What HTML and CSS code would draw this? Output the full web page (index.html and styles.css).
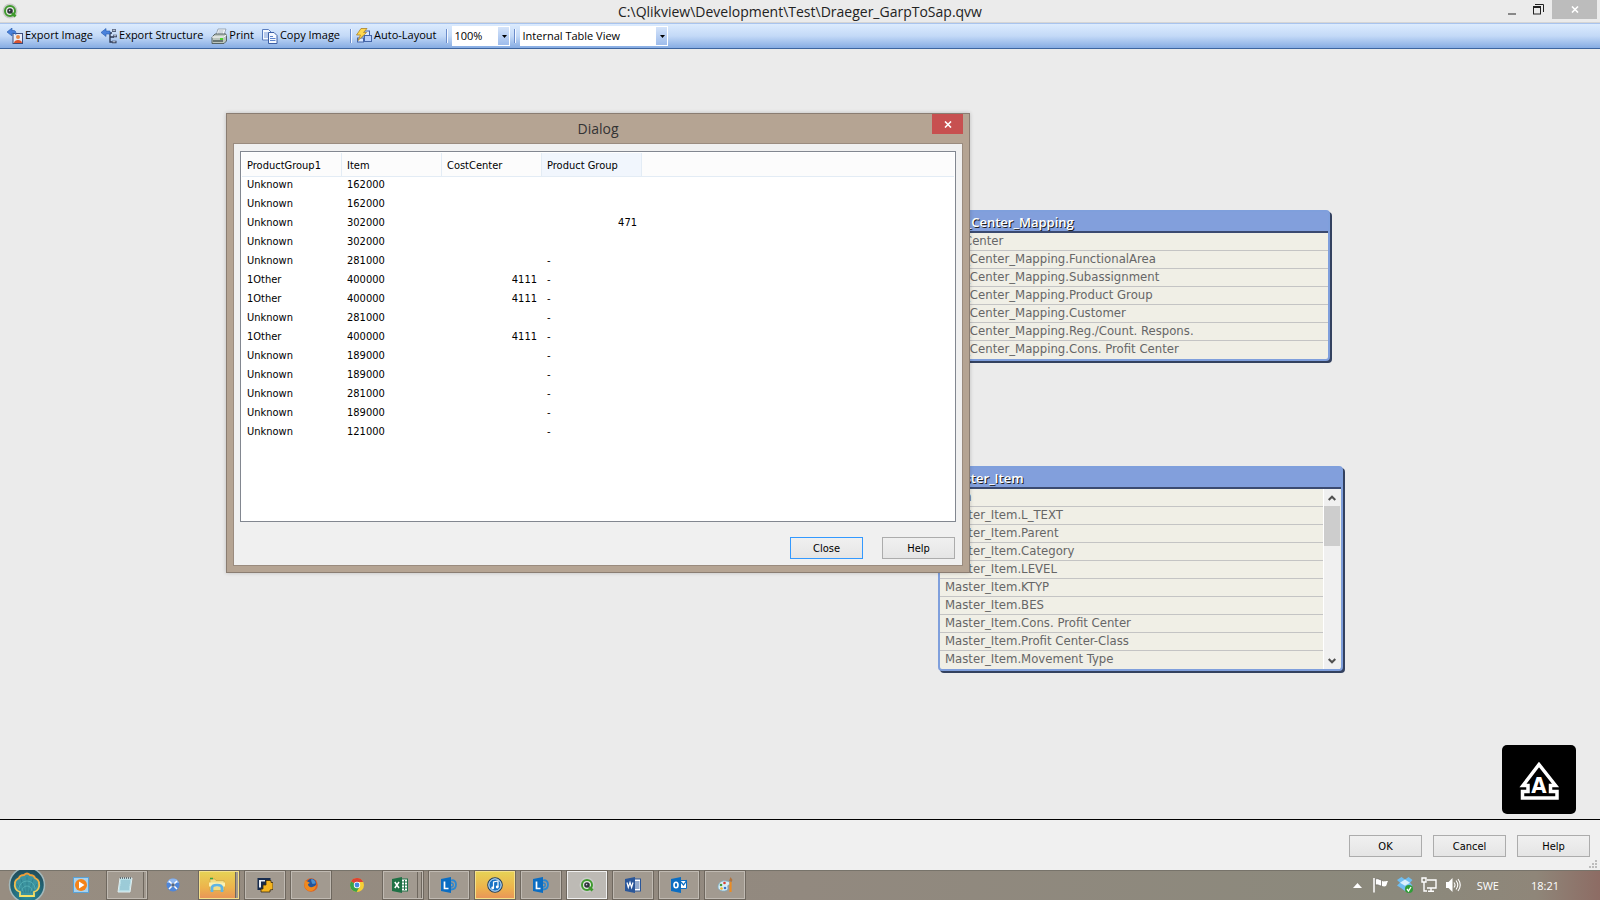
FILE: index.html
```html
<!DOCTYPE html>
<html lang="en">
<head>
    <meta charset="UTF-8">
    <meta name="viewport" content="width=device-width, initial-scale=1.0">
    <title>C:\Qlikview\Development\Test\Draeger_GarpToSap.qvw</title>
    <link rel="stylesheet" href="styles.css">
</head>
<body>

    <!-- Shared shapes -->
    <svg class="defs" width="0" height="0">
        <defs>
            <symbol id="qlik" viewBox="0 0 16 16">
                <circle cx="8" cy="8" r="7.5" fill="#c9cbc8"/>
                <circle cx="8" cy="8" r="5" fill="#e9ece8" stroke="#3f9a2e" stroke-width="2"/>
                <path d="M10 10l3.500 3.500" stroke="#3f9a2e" stroke-width="2.8"/>
                <circle cx="8" cy="8" r="2.8" fill="#30343a"/>
                <circle cx="7.6" cy="7.6" r=".8" fill="#c8d4e0"/>
            </symbol>
            <symbol id="cross" viewBox="0 0 8 7">
                <path d="M1 .5l6 6M7 .5l-6 6" stroke="#fff" stroke-width="1.6"/>
            </symbol>
            <symbol id="lync" viewBox="0 0 16 16">
                <path d="M10 3.500c3-1 5 1 5 4s-2 5-5 5" fill="none" stroke="#2a86d0" stroke-width="1.8"/>
                <path d="M10 6c3 0 3 4 0 4" fill="none" stroke="#2a86d0" stroke-width="1.4"/>
                <path d="M0 2l10-2v16l-10-2z" fill="#0b6dc2"/>
                <path d="M3.500 4.500v7h4" fill="none" stroke="#fff" stroke-width="1.7"/>
            </symbol>
        </defs>
    </svg>

    <div class="screen">
        <header class="titlebar">
            <svg class="app-icon" width="16" height="16"><use href="#qlik"/></svg>
            <h1 class="window-title">C:\Qlikview\Development\Test\Draeger_GarpToSap.qvw</h1>
            <div class="window-buttons">
                <button class="win-btn" aria-label="Minimize">
                    <svg width="8" height="10"><rect y="8" width="8" height="2" fill="#888"/></svg>
                </button>
                <button class="win-btn" aria-label="Restore">
                    <svg width="11" height="11" fill="none" stroke="#222"><path d="M2 .5h8.500v7.500"/><rect x=".5" y="3" width="7" height="7"/><path d="M0 3h8" stroke-width="2"/></svg>
                </button>
                <button class="win-btn win-close" aria-label="Close">
                    <svg width="8" height="7"><use href="#cross"/></svg>
                </button>
            </div>
        </header>

        <nav class="toolbar">
            <button class="tool">
                <svg width="16" height="16" viewBox="0 0 16 16">
                    <rect x="6" y="5.500" width="9.500" height="10" fill="#e8edf8" stroke="#3b4c7c"/>
                    <circle cx="11" cy="9" r="2" fill="#e58b4a"/>
                    <path d="M7 15c0-4 8-4 8 0z" fill="#d9522f"/>
                    <path d="M0 4l5-4v2.500h2c2 0 2 3 2 4-1-1-2-1.500-4-1.200v2.700z" fill="#4a82dc" stroke="#2457ab" stroke-width=".6"/>
                </svg>
                Export Image
            </button>
            <button class="tool">
                <svg width="16" height="16" viewBox="0 0 16 16">
                    <path d="M8 5h3M9 5v9h3M9 9h4" fill="none" stroke="#2b3650" stroke-width="1.3"/>
                    <path d="M11 2.500h4M12 8h4M11 14h4.500" stroke="#2b3650" stroke-width="2.6"/>
                    <path d="M11.500 2.300h3M12.500 7.800h3M11.500 13.800h3" stroke="#dde5f5" stroke-width="1"/>
                    <path d="M0 4.500l5-4v2.500h4v3h-4v2.500z" fill="#4a82dc" stroke="#2457ab" stroke-width=".6"/>
                </svg>
                Export Structure
            </button>
            <button class="tool">
                <svg width="16" height="16" viewBox="0 0 16 16">
                    <path d="M5 7l2-6h8l-2 6z" fill="#f6f8fa" stroke="#8b98a4" stroke-width=".8"/>
                    <path d="M7.500 3h5M7 5h5" stroke="#9aa8b4" stroke-width=".8"/>
                    <path d="M1 9l3-3h11l.5 2v5l-2.500 2.500h-12z" fill="#bcc6bf" stroke="#4d5a59" stroke-width=".9"/>
                    <path d="M1 9h11.500l3-2" fill="none" stroke="#fff"/>
                    <path d="M2 13h10" stroke="#44524f" stroke-width="1.4"/>
                    <rect x="9" y="10" width="3" height="2" fill="#4cd32f"/>
                </svg>
                Print
            </button>
            <button class="tool">
                <svg width="16" height="16" viewBox="0 0 16 16" stroke="#5a7dbf" fill="#f5f9ff">
                    <path d="M.5 1.500h6l2.500 2.500v8h-8.500z"/>
                    <path d="M2 5h4M2 7h4M2 9h4" stroke="#7b9bd6"/>
                    <path d="M6.500 4.500h5.500l3 3v8h-8.500z" stroke="#3b5ea5"/>
                    <path d="M8 8.500h3M8 10.500h5.500M8 12.500h5.500" stroke="#5c83cc"/>
                </svg>
                Copy Image
            </button>
            <span class="sep"></span>
            <button class="tool">
                <svg width="16" height="16" viewBox="0 0 16 16">
                    <rect x="6.500" y="3" width="7" height="5" fill="#d9e7ff" stroke="#4465a8"/>
                    <rect x="8.500" y="7.500" width="7" height="6" fill="#b9d0fa" stroke="#4465a8"/>
                    <rect x="1.500" y="10" width="6" height="4" fill="#d9e7ff" stroke="#4465a8"/>
                    <path d="M5 .5h6l-3.500 4h3l-8.500 8 2.500-5.500h-4z" fill="#ffd84d" stroke="#a9812a" stroke-width=".8"/>
                </svg>
                Auto-Layout
            </button>
            <span class="sep"></span>
            <div class="combo combo-zoom">
                <select aria-label="Zoom"><option>100%</option></select>
                <svg class="combo-arrow" width="5" height="3"><path d="M0 0h5l-2.500 3z"/></svg>
            </div>
            <span class="sep"></span>
            <div class="combo combo-view">
                <select aria-label="View"><option>Internal Table View</option></select>
                <svg class="combo-arrow" width="5" height="3"><path d="M0 0h5l-2.500 3z"/></svg>
            </div>
        </nav>

        <main class="canvas">
            <section class="node node-mapping">
                <h2 class="node-title">Cost_Center_Mapping</h2>
                <ul class="fields">
                    <li>CostCenter</li>
                    <li>Cost_Center_Mapping.FunctionalArea</li>
                    <li>Cost_Center_Mapping.Subassignment</li>
                    <li>Cost_Center_Mapping.Product Group</li>
                    <li>Cost_Center_Mapping.Customer</li>
                    <li>Cost_Center_Mapping.Reg./Count. Respons.</li>
                    <li>Cost_Center_Mapping.Cons. Profit Center</li>
                </ul>
            </section>

            <section class="node node-item">
                <h2 class="node-title">Master_Item</h2>
                <div class="node-body">
                    <ul class="fields">
                        <li>Item</li>
                        <li>Master_Item.L_TEXT</li>
                        <li>Master_Item.Parent</li>
                        <li>Master_Item.Category</li>
                        <li>Master_Item.LEVEL</li>
                        <li>Master_Item.KTYP</li>
                        <li>Master_Item.BES</li>
                        <li>Master_Item.Cons. Profit Center</li>
                        <li>Master_Item.Profit Center-Class</li>
                        <li>Master_Item.Movement Type</li>
                    </ul>
                    <div class="scrollbar">
                        <button class="scroll-btn" aria-label="Scroll up"><svg width="8" height="6"><path d="M.7 5l3.300-3.300 3.300 3.300" fill="none" stroke="#505050" stroke-width="2"/></svg></button>
                        <div class="thumb"></div>
                        <button class="scroll-btn" aria-label="Scroll down"><svg width="8" height="6"><path d="M.7 1l3.300 3.300 3.300-3.300" fill="none" stroke="#505050" stroke-width="2"/></svg></button>
                    </div>
                </div>
            </section>

            <svg class="badge" width="74" height="69" viewBox="0 0 74 69">
                <rect width="74" height="69" rx="5"/>
                <path d="M37 19.500L53.500 40.500h-5v6h6.500v6.500h-34.500v-6.500h5.500v-6h-5z" fill="none" stroke="#fff" stroke-width="3.5"/>
                <text class="badge-letter" x="37" y="48" text-anchor="middle">A</text>
            </svg>

            <section class="dialog" role="dialog" aria-labelledby="dialog-title">
                <div class="dialog-head">
                    <h2 class="dialog-title" id="dialog-title">Dialog</h2>
                    <button class="dialog-close" aria-label="Close dialog"><svg width="8" height="7"><use href="#cross"/></svg></button>
                </div>
                <div class="dialog-body">
                    <div class="grid">
                        <table>
                            <thead>
                                <tr><th>ProductGroup1</th><th>Item</th><th>CostCenter</th><th class="hot">Product Group</th><th class="rest"></th></tr>
                            </thead>
                            <tbody>
                                <tr><td>Unknown</td><td>162000</td><td></td><td></td><td></td></tr>
                                <tr><td>Unknown</td><td>162000</td><td></td><td></td><td></td></tr>
                                <tr><td>Unknown</td><td>302000</td><td></td><td class="num">471</td><td></td></tr>
                                <tr><td>Unknown</td><td>302000</td><td></td><td></td><td></td></tr>
                                <tr><td>Unknown</td><td>281000</td><td></td><td>-</td><td></td></tr>
                                <tr><td>1Other</td><td>400000</td><td class="num">4111</td><td>-</td><td></td></tr>
                                <tr><td>1Other</td><td>400000</td><td class="num">4111</td><td>-</td><td></td></tr>
                                <tr><td>Unknown</td><td>281000</td><td></td><td>-</td><td></td></tr>
                                <tr><td>1Other</td><td>400000</td><td class="num">4111</td><td>-</td><td></td></tr>
                                <tr><td>Unknown</td><td>189000</td><td></td><td>-</td><td></td></tr>
                                <tr><td>Unknown</td><td>189000</td><td></td><td>-</td><td></td></tr>
                                <tr><td>Unknown</td><td>281000</td><td></td><td>-</td><td></td></tr>
                                <tr><td>Unknown</td><td>189000</td><td></td><td>-</td><td></td></tr>
                                <tr><td>Unknown</td><td>121000</td><td></td><td>-</td><td></td></tr>
                            </tbody>
                        </table>
                    </div>
                    <div class="dialog-actions">
                        <button class="btn btn-default">Close</button>
                        <button class="btn">Help</button>
                    </div>
                </div>
            </section>
        </main>

        <footer class="actions">
            <button class="btn">OK</button>
            <button class="btn">Cancel</button>
            <button class="btn">Help</button>
            <svg class="grip" width="8" height="8" fill="#bdbdbd"><path d="M6 0h2v2h-2zM3 3h2v2h-2zM6 3h2v2h-2zM0 6h2v2h-2zM3 6h2v2h-2zM6 6h2v2h-2z"/></svg>
        </footer>

        <div class="taskbar">
            <button class="start" aria-label="Start">
                <svg width="38" height="38" viewBox="0 0 38 38">
                    <defs>
                        <radialGradient id="orb" cx=".5" cy=".75" r=".75"><stop offset="0" stop-color="#2f94a0"/><stop offset=".6" stop-color="#1f6475"/><stop offset="1" stop-color="#234653"/></radialGradient>
                        <linearGradient id="shell" x1="0" y1="0" x2="0" y2="1"><stop offset="0" stop-color="#ee9a35"/><stop offset="1" stop-color="#f5e268"/></linearGradient>
                    </defs>
                    <circle cx="19" cy="19" r="17.500" fill="url(#orb)" stroke="#a3b9bc" stroke-width="1.5"/>
                    <path d="M12 30v-4c-4-1-6-5-5-9 0-3 2-4 4-5 1-3 4-3 5-3 2-2 4-2 6 0 1 0 4 0 5 3 2 1 4 2 4 5 1 4-1 8-5 9v4z" fill="#3c94a0" stroke="url(#shell)" stroke-width="1.8"/>
                    <path d="M19 27V11M17 27l-4-14M21 27l4-14M15 27l-6-9M23 27l6-9" stroke="#2a7785" stroke-width=".6"/>
                    <path d="M14 25a5 5 0 0 1 10 0M11 23a8 8 0 0 1 16 0" stroke="#64bfc1" stroke-width=".6" fill="none"/>
                </svg>
            </button>
            <button class="task" aria-label="Media Player">
                <svg width="16" height="16" viewBox="0 0 16 16"><rect x=".5" y=".5" width="15" height="15" fill="#a9d2ee" stroke="#59a2d6"/><circle cx="8" cy="8" r="6" fill="#f58318"/><path d="M6 4.500l5.500 3.500-5.500 3.500z" fill="#fff"/></svg>
            </button>
            <button class="task open stack" aria-label="Notepad">
                <svg width="16" height="16" viewBox="0 0 16 16"><path d="M3 1h12l-2 14h-12z" fill="#b5dde6" stroke="#dfeef0"/><path d="M4 4h9M4 6h9M3.500 8h9M3 10h9M3 12h9" stroke="#6faabb" stroke-width=".7"/><path d="M3 1h12" stroke="#47525a" stroke-width="1.6" stroke-dasharray="1 1"/></svg>
            </button>
            <button class="task" aria-label="Remote tools">
                <svg width="14" height="14" viewBox="0 0 14 14"><circle cx="7" cy="7" r="6.500" fill="#4f86d9"/><path d="M1 5a6.300 6.300 0 0 1 12 0z" fill="#8db5ee"/><path d="M3 3l8 8M11 3l-8 8" stroke="#fff" stroke-width="1.5"/><rect x="5.500" y="5.500" width="3" height="3" fill="#5a667a"/></svg>
            </button>
            <button class="task open stack alert" aria-label="Explorer">
                <svg width="16" height="16" viewBox="0 0 16 16"><path d="M1 2h5l1 1.500h8v10h-14z" fill="#f2dd86" stroke="#c9a746" stroke-width=".7"/><path d="M1 1.500h3" stroke="#35a545" stroke-width="1.5"/><path d="M0 5.500h16v4h-16z" fill="#fbf0ae"/><path d="M3 15v-4c0-4 10-4 10 0v4" fill="none" stroke="#5fb4e4" stroke-width="2.7"/></svg>
            </button>
            <button class="task open" aria-label="Terminal">
                <svg width="16" height="16" viewBox="0 0 16 16"><path d="M.5 1h13v12h-13z" fill="#172b4d"/><path d="M2 3h6v1.500h-4v6h-2z" fill="#e9edf2"/><path d="M6 8h3V3.500h5v2h2v7l-3 .5v2h-9v-3h2z" fill="#f5b51f" stroke="#3d2d10" stroke-width=".8"/></svg>
            </button>
            <button class="task open" aria-label="Firefox">
                <svg width="14" height="14" viewBox="0 0 14 14"><circle cx="7" cy="7" r="6.800" fill="#e0611c"/><circle cx="7.500" cy="5.500" r="4.700" fill="#24559c"/><path d="M7 1.500c2-1 5 2 4.500 4l-3 .5-1-2z" fill="#4d91cf"/><path d="M1 2c1 2 3 1 5 3l-2 1c0 4 5 4 8 1 0 4-3 6-5.500 6s-6-2-6-6c0-2 0-4 .5-5z" fill="#f0891e"/></svg>
            </button>
            <button class="task" aria-label="Chrome">
                <svg width="14" height="14" viewBox="0 0 14 14"><circle cx="7" cy="7" r="7" fill="#f7cf35"/><path d="M7 7L1 3.400a7 7 0 0 1 12.200.6H7z" fill="#dd4234"/><path d="M7 7L1 3.400a7 7 0 0 0 5.500 10.500l3-5z" fill="#3ba14b"/><circle cx="7" cy="7" r="3.200" fill="#fff"/><circle cx="7" cy="7" r="2.400" fill="#4787e0"/></svg>
            </button>
            <button class="task open stack2" aria-label="Excel">
                <svg width="16" height="16" viewBox="0 0 16 16"><rect x="9" y="2" width="6.500" height="12" fill="#fff" stroke="#1e7145"/><path d="M10 5h5M10 8h5M10 11h5M12.500 3v10" stroke="#1e7145"/><path d="M0 2l10-2v16l-10-2z" fill="#1e7145"/><path d="M2.800 5l4.200 6M7 5l-4.200 6" stroke="#fff" stroke-width="1.5"/></svg>
            </button>
            <button class="task open" aria-label="Lync"><svg width="16" height="16"><use href="#lync"/></svg></button>
            <button class="task open alert" aria-label="iTunes">
                <svg width="16" height="16" viewBox="0 0 16 16"><circle cx="8" cy="8" r="7.200" fill="#1973c4" stroke="#22405f" stroke-width="1.2"/><circle cx="8" cy="8" r="6.200" fill="none" stroke="#dcecf8"/><path d="M6.500 11V5l4.500-1v6" fill="none" stroke="#fff" stroke-width="1.2"/><circle cx="5.700" cy="11" r="1.400" fill="#fff"/><circle cx="10.200" cy="10" r="1.400" fill="#fff"/></svg>
            </button>
            <button class="task open" aria-label="Lync chat"><svg width="16" height="16"><use href="#lync"/></svg></button>
            <button class="task open active" aria-label="QlikView"><svg width="16" height="16"><use href="#qlik"/></svg></button>
            <button class="task open" aria-label="Word">
                <svg width="16" height="16" viewBox="0 0 16 16"><rect x="9" y="2" width="6.500" height="12" fill="#fff" stroke="#2a5699"/><path d="M10 5h4.500M10 7h4.500M10 9h4.500M10 11h4.500" stroke="#2a5699"/><path d="M0 2l10-2v16l-10-2z" fill="#2a5699"/><path d="M2 5.500l1.300 5 1.700-5 1.600 5 1.400-5" fill="none" stroke="#fff" stroke-width="1.2"/></svg>
            </button>
            <button class="task open" aria-label="Outlook">
                <svg width="16" height="16" viewBox="0 0 16 16"><path d="M9.500 3.500h6v8h-6z" fill="#fff" stroke="#0b6dc2"/><path d="M10 5l2.500 3 3.500-5" fill="none" stroke="#0b6dc2" stroke-width="1.3"/><path d="M0 2l10-2v16l-10-2z" fill="#0b6dc2"/><ellipse cx="5" cy="8" rx="2" ry="2.800" fill="none" stroke="#fff" stroke-width="1.6"/></svg>
            </button>
            <button class="task open" aria-label="Paint">
                <svg width="16" height="16" viewBox="0 0 16 16"><path d="M1 10c0-4 4-7 8-6 4 0 5 3 3 4-2 0-1 2-1 4-1 3-10 3-10-2z" fill="#d8edf6" stroke="#7aa9c2" stroke-width=".8"/><circle cx="4" cy="8" r="1.300" fill="#3f9a3e"/><circle cx="7.500" cy="6" r="1.300" fill="#d8402f"/><circle cx="4.500" cy="11.500" r="1.300" fill="#f2b52c"/><circle cx="8" cy="11" r="1.300" fill="#3977c9"/><path d="M13.500 5v10" stroke="#ec8c23" stroke-width="2.2"/><path d="M12 4l1.500-4 2 3-1 2z" fill="#b0733e"/></svg>
            </button>

            <div class="tray">
                <svg class="tray-more" width="9" height="5"><path d="M4.500 0l4.500 5h-9z" fill="#fff"/></svg>
                <svg width="16" height="16" viewBox="0 0 16 16"><path d="M1 1v14.500" stroke="#fff" stroke-width="1.5"/><path d="M2.500 2c3-1 4 1 6 1v6c-2 0-3-2-6-1z" fill="#fff" stroke="#55524c" stroke-width=".5"/><path d="M9 4c2 1 3 0 6 0-1 2-1 3-2 5-2 1-3 0-4 0z" fill="#fff"/></svg>
                <svg width="16" height="16" viewBox="0 0 16 16"><path d="M4.500 0l3.500 2.500 3.500-2.500 4 3-2.500 2.700 2.500 2.800-4 2.500-3.500 3-4-3-4-2.500 3-2.800-3-2.700z" fill="#6fbdf0"/><path d="M8 2.500l5 3.200-5 3-5-3z" fill="#d9effc"/><circle cx="12" cy="12" r="4" fill="#2f9e36"/><path d="M10 12l1.500 2 2.500-4" fill="none" stroke="#fff" stroke-width="1.3"/></svg>
                <svg width="16" height="16" viewBox="0 0 16 16" fill="none" stroke="#fff" stroke-width="1.4"><path d="M6 3h9v8H6M10 11v3M7 14.300h6"/><path d="M1 1h4v4h-4zM3 5v9h3"/></svg>
                <svg width="16" height="16" viewBox="0 0 16 16"><path d="M1 5h2.500l4-4v14l-4-4H1z" fill="#fff"/><path d="M9 5.500q2 2.500 0 5M11 3.500q3.500 4.500 0 9M13 2q4.500 6 0 12" fill="none" stroke="#fff" stroke-width="1.1"/></svg>
                <span class="lang">SWE</span>
                <time class="clock">18:21</time>
            </div>
        </div>
    </div>

</body>
</html>
```
FILE: styles.css
```css
* {
    box-sizing: border-box;
}

body {
    margin: 0;
    font-family: "Open Sans", "Noto Sans", sans-serif;
    font-size: 11px;
    color: #000;
    background-color: #ebebeb;
}

button {
    margin: 0;
    padding: 0;
    border: none;
    background: none;
    font: inherit;
    color: inherit;
}

h1, h2 {
    margin: 0;
    font-weight: normal;
}

svg {
    display: block;
    flex-shrink: 0;
}

.defs {
    position: absolute;
}

.screen {
    display: flex;
    flex-direction: column;
    height: 100vh;
    overflow: hidden;
}

/* Title bar */
.titlebar {
    display: grid;
    grid-template-columns: 1fr auto 1fr;
    height: 23px;
    border-bottom: 1px solid #d5d5d5;
}

.app-icon {
    margin: 3px 2px;
}

.window-title {
    font-size: 14px;
    line-height: 23px;
    color: #222;
}

.window-buttons {
    display: flex;
    justify-content: flex-end;
    padding-right: 3px;
}

.win-btn {
    display: flex;
    align-items: center;
    justify-content: center;
    width: 26px;
    height: 19px;
}

.win-close {
    width: 45px;
    margin-left: 1px;
    background-color: #bcbcbc;
}

/* Toolbar */
.toolbar {
    display: flex;
    align-items: center;
    height: 26px;
    padding: 0 7px;
    border-top: 1px solid #a9c4ee;
    border-bottom: 1px solid #3d659f;
    background: linear-gradient(#dcebfe, #c3d9f7 50%, #86ace3);
}

.tool {
    display: flex;
    align-items: flex-start;
    gap: 2px;
    margin-right: 8px;
    line-height: 14px;
    white-space: nowrap;
}

.sep {
    width: 2px;
    height: 14px;
    margin: 0 4px 0 2px;
    border-left: 1px solid #6a8ccb;
    border-right: 1px solid #f4f8ff;
}

.combo {
    display: grid;
    grid-template-columns: 1fr 12px;
    align-items: center;
    height: 20px;
    margin-right: 2px;
}

.combo select {
    grid-area: 1 / 1 / 2 / 3;
    width: 100%;
    height: 20px;
    padding: 0 1px 2px;
    border: 1px solid #fff;
    border-radius: 0;
    appearance: none;
    background: linear-gradient(#d5e4fa, #9dbcec) right / 11px 100% no-repeat #fff;
    font: inherit;
    color: inherit;
}

.combo-arrow {
    grid-area: 1 / 2;
    justify-self: center;
    pointer-events: none;
}

.combo-zoom {
    width: 58px;
}

.combo-view {
    width: 148px;
}

/* Canvas with the table boxes */
.canvas {
    position: relative;
    flex: 1;
}

.node {
    position: absolute;
    border: 2px solid #7f9fdc;
    border-radius: 4px;
    background-color: #f0efe6;
    box-shadow: 2px 2px 0 #33415f;
    font-family: "DejaVu Sans Condensed", "DejaVu Sans", sans-serif;
    font-size: 13px;
    color: #666;
}

.node-mapping {
    top: 161px;
    left: 931px;
    width: 399px;
}

.node-item {
    top: 417px;
    left: 938px;
    width: 405px;
}

.node-title {
    height: 21px;
    padding: 0 5px;
    border-bottom: 2px solid #3b4a70;
    background-color: #829fdc;
    font-family: "Open Sans", sans-serif;
    font-size: 13px;
    font-weight: 600;
    line-height: 21px;
    color: #fff;
    text-shadow: 1px 1px 0 #222;
}

.node-body {
    display: flex;
}

.fields {
    flex: 1;
    margin: 0;
    padding: 0;
    list-style: none;
}

.fields li {
    height: 18px;
    padding: 0 5px;
    border-bottom: 1px solid #c4c4c4;
    line-height: 15px;
    white-space: nowrap;
}

.fields li:last-child {
    border-bottom: none;
}

.scrollbar {
    display: flex;
    flex-direction: column;
    width: 17px;
    margin-right: 1px;
    border-left: 1px solid #fff;
    background-color: #f0f0f0;
}

.scroll-btn {
    display: flex;
    align-items: center;
    justify-content: center;
    height: 17px;
}

.scroll-btn:last-child {
    margin-top: auto;
}

.thumb {
    height: 40px;
    background-color: #cdcdcd;
}

.badge {
    position: absolute;
    right: 24px;
    bottom: 5px;
}

.badge-letter {
    font-family: "DejaVu Sans Condensed", sans-serif;
    font-size: 22px;
    font-weight: bold;
    fill: #fff;
}

/* Dialog */
.dialog {
    position: absolute;
    top: 64px;
    left: 226px;
    display: flex;
    flex-direction: column;
    width: 744px;
    height: 460px;
    padding: 0 6px 6px;
    border: 1px solid #8a7d72;
    background-color: #b5a493;
    box-shadow: 0 0 4px rgba(0, 0, 0, 0.2);
}

.dialog-head {
    display: grid;
    grid-template-columns: 1fr auto 1fr;
    height: 29px;
}

.dialog-title {
    grid-column: 2;
    font-size: 14px;
    line-height: 30px;
    color: #333;
}

.dialog-close {
    display: flex;
    align-items: center;
    justify-content: center;
    justify-self: end;
    width: 31px;
    height: 20px;
    background-color: #c75050;
}

.dialog-body {
    display: flex;
    flex: 1;
    flex-direction: column;
    padding: 7px 6px 6px;
    border: 1px solid #9a8b7e;
    background-color: #f0f0f0;
    font-family: "DejaVu Sans Condensed", "DejaVu Sans", sans-serif;
    font-size: 11px;
}

.grid {
    flex: 1;
    padding: 1px;
    border: 1px solid #828790;
    background-color: #fff;
}

.grid table {
    width: 100%;
    border-collapse: separate;
    border-spacing: 0;
    table-layout: fixed;
}

.grid th {
    width: 100px;
    height: 24px;
    padding: 2px 5px 0;
    border-right: 1px solid #e3ecf5;
    border-bottom: 1px solid #e3ecf5;
    background-color: #fcfcfc;
    font-weight: normal;
    text-align: left;
}

.grid th.hot {
    background-color: #f1f6fd;
}

.grid th.rest {
    width: auto;
    border-right: none;
}

.grid td {
    height: 19px;
    padding: 0 5px 3px;
    line-height: 16px;
}

.grid td.num {
    text-align: right;
}

.dialog-actions {
    display: flex;
    justify-content: flex-end;
    gap: 19px;
    padding: 15px 1px 0 0;
}

.btn {
    width: 73px;
    height: 22px;
    border: 1px solid #acacac;
    background: linear-gradient(#f0f0f0, #e5e5e5);
    font-family: "DejaVu Sans Condensed", "DejaVu Sans", sans-serif;
    font-size: 11px;
}

.btn-default {
    border-color: #3399ff;
}

/* Bottom buttons */
.actions {
    position: relative;
    display: flex;
    justify-content: flex-end;
    gap: 11px;
    height: 51px;
    padding: 15px 10px 0;
    border-top: 1px solid #000;
    background-color: #f0f0f0;
}

.grip {
    position: absolute;
    right: 3px;
    bottom: 2px;
}

/* Taskbar */
.taskbar {
    display: flex;
    gap: 4px;
    height: 30px;
    background: linear-gradient(90deg, #978d81, #92897f 50%, #8b897c 88%, #8f8679 96%, #8d6c64);
    box-shadow: inset 0 1px 0 #77736a;
}

.start {
    width: 56px;
    height: 30px;
    padding-left: 8px;
}

.start svg {
    margin-top: -4px;
}

.task {
    display: flex;
    align-items: center;
    justify-content: center;
    width: 42px;
    height: 30px;
}

.open {
    border: 1px solid #6e675e;
    background-color: #a29a90;
    box-shadow: inset 0 0 0 1px #c0bab2;
}

.stack {
    padding-right: 5px;
    background: linear-gradient(90deg, transparent 36px, #6e675e 36px, #6e675e 37px, transparent 37px) #a29a90;
}

.stack2 {
    padding-right: 7px;
    background: linear-gradient(90deg, transparent 34px, #6e675e 34px, #6e675e 35px, transparent 35px, transparent 38px, #6e675e 38px, #6e675e 39px, transparent 39px) #a29a90;
}

.alert {
    background: linear-gradient(#e6d456, #edb34c 60%, #e8935a);
    box-shadow: inset 0 0 0 1px #f5e08a;
}

.stack.alert {
    background: linear-gradient(90deg, transparent 36px, #6e675e 36px, #6e675e 37px, #a29a90 37px), linear-gradient(#e6d456, #edb34c 60%, #e8935a);
}

.active {
    background-color: #bdbab5;
    box-shadow: inset 0 0 0 1px #f0f0f0;
}

.tray {
    display: flex;
    align-items: center;
    gap: 8px;
    margin-left: auto;
    padding-right: 41px;
    color: #fff;
}

.tray-more {
    margin-right: 3px;
}

.lang {
    margin: 0 24px 0 8px;
}
```
